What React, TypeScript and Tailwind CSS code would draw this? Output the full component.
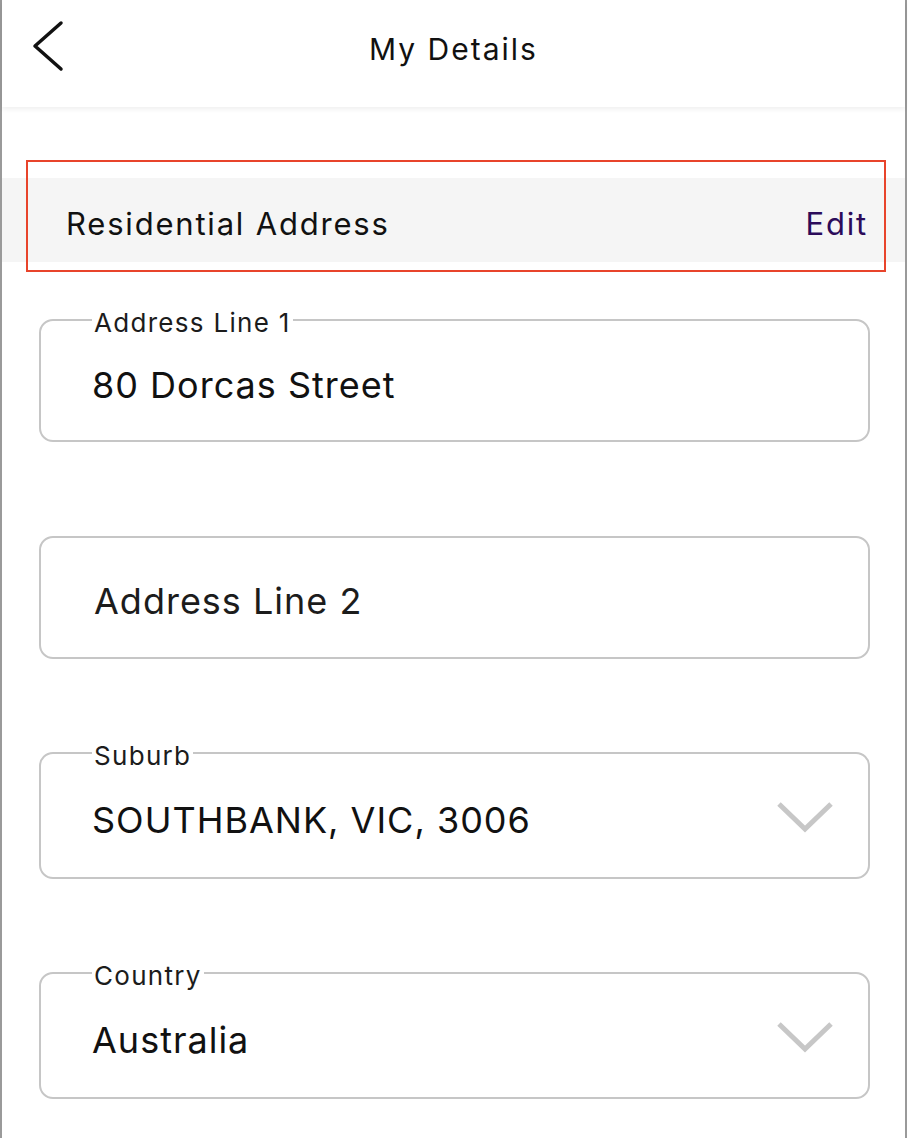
const font = { fontFamily: "Inter, 'Noto Sans', sans-serif" };

function Field({
  label,
  value,
  placeholder,
  select,
}: {
  label?: string;
  value: string;
  placeholder?: boolean;
  select?: boolean;
}) {
  return (
    <fieldset
      className={`ml-[37px] mr-[35px] border-2 border-[#c6c6c6] rounded-[14px] pl-[51px] pr-[34px] ${
        label ? (select ? "pt-[30px] pb-[37px]" : "pt-[28px] pb-[35px]") : "pt-[43px] pb-[36px]"
      }`}
    >
      {label && (
        <legend className="px-[2px] pt-[6px] text-[26px] leading-[28px] text-[#1c1c1c] tracking-[1.3px]">
          {label}
        </legend>
      )}
      <div className="flex items-center justify-between">
        <span
          className={`text-[36px] leading-[40px] tracking-[1px] ${
            placeholder ? "text-[#1c1c1c] pl-[2px]" : "text-[#111]"
          }`}
        >
          {value}
        </span>
        {select && (
          <svg width="58" height="34" viewBox="0 0 58 34" className="-mt-[8px]">
            <path d="M3 5 L29 30 L55 5" fill="none" stroke="#c7c7c7" strokeWidth="5" />
          </svg>
        )}
      </div>
    </fieldset>
  );
}

export default function App() {
  return (
    <div className="w-[908px] min-h-[1138px] bg-white" style={font}>
      <div className="border-l-2 border-r-2 border-[#9a9a9a] mr-[1px] min-h-[1138px]">
        {/* Header */}
        <header className="relative z-10 h-[107px] bg-white flex items-center justify-center shadow-[0_2px_5px_rgba(0,0,0,0.07)]">
          <button className="absolute left-[24px] top-[14px] p-1">
            <svg width="36" height="56" viewBox="0 0 36 56">
              <path
                d="M31 5 L5 28 L31 51"
                fill="none"
                stroke="#111"
                strokeWidth="3.5"
                strokeLinecap="round"
                strokeLinejoin="round"
              />
            </svg>
          </button>
          <h1 className="text-[30px] text-[#111] tracking-[2px] -mt-[8px]">My Details</h1>
        </header>

        {/* Section header */}
        <div className="relative mt-[71px]">
          <div className="h-[84px] bg-[#f5f5f5] flex items-center justify-between pl-[64px] pr-[37px] pt-[8px]">
            <span className="text-[31px] text-[#111] tracking-[1.8px]">Residential Address</span>
            <button className="text-[31px] text-[#2c0b5a] tracking-[1.8px]">Edit</button>
          </div>
          <div className="absolute -top-[18px] -bottom-[10px] left-[24px] right-[19px] border-2 border-[#e8442b] pointer-events-none" />
        </div>

        {/* Fields */}
        <div className="flex flex-col pt-[41px]">
          <Field label="Address Line 1" value="80 Dorcas Street" />
          <div className="h-[94px]" />
          <Field value="Address Line 2" placeholder />
          <div className="h-[77px]" />
          <Field label="Suburb" value="SOUTHBANK, VIC, 3006" select />
          <div className="h-[77px]" />
          <Field label="Country" value="Australia" select />
        </div>
      </div>
    </div>
  );
}
